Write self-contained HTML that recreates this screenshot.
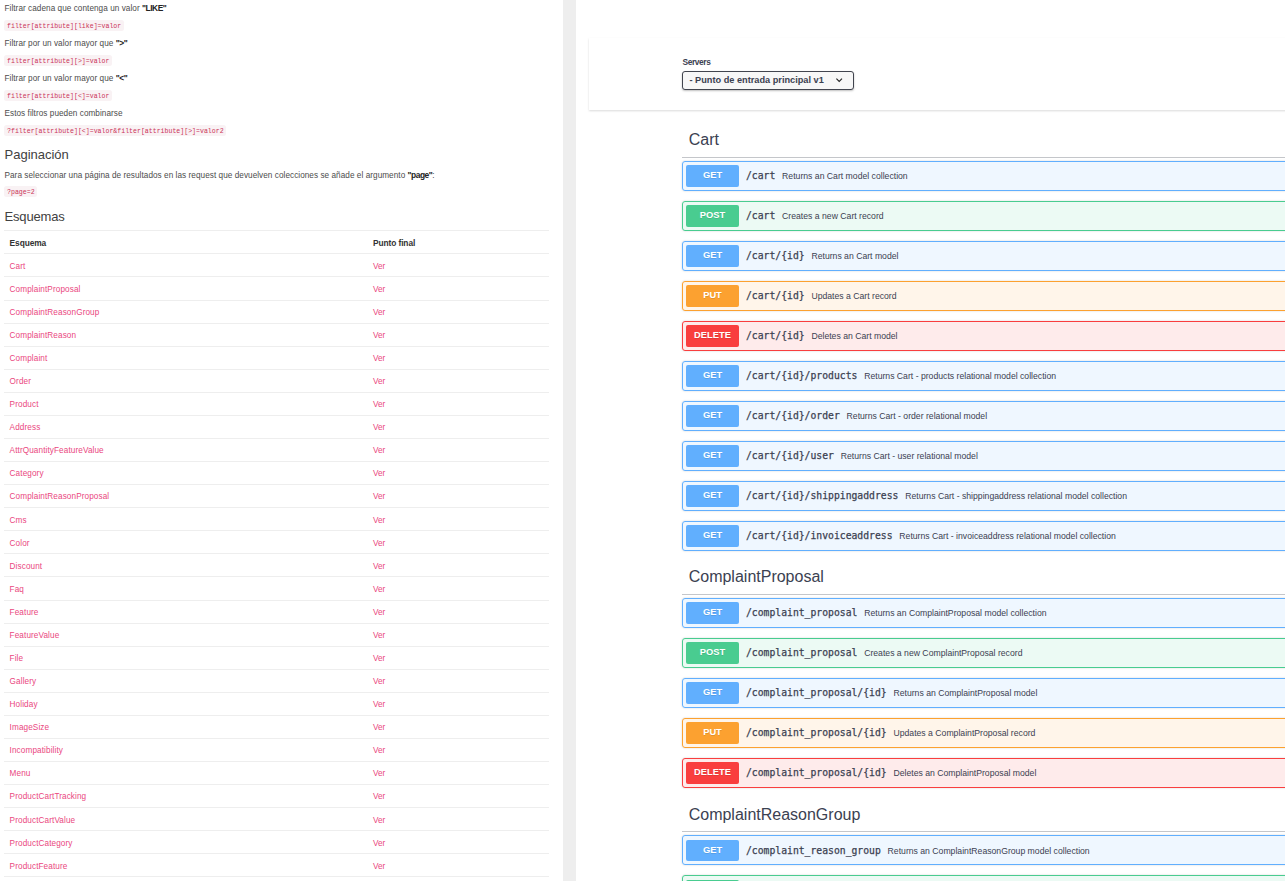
<!DOCTYPE html>
<html lang="es"><head><meta charset="utf-8"><title>API</title>
<style>
html,body{margin:0;padding:0;background:#fff;}
body{width:1285px;height:881px;overflow:hidden;position:relative;font-family:"Liberation Sans",sans-serif;}
#left{position:absolute;left:0;top:0;width:563px;height:881px;overflow:hidden;background:#fff;color:#333;font-family:"Liberation Sans",sans-serif;font-size:8px;}
#bar{position:absolute;left:563px;top:0;width:13px;height:881px;background:#eee;}
#right{position:absolute;left:576px;top:0;width:709px;height:881px;overflow:hidden;background:#fff;color:#3b4151;}
.p{position:absolute;left:4.5px;white-space:nowrap;line-height:12px;height:12px;margin:0;font-size:8.2px;letter-spacing:0.05px;color:#4c4c4c;}
.p b{color:#222;font-size:8.4px;letter-spacing:-0.45px;}
.c{position:absolute;left:4px;white-space:nowrap;box-sizing:border-box;height:10.5px;line-height:7.5px;background:#f9f2f4;color:#cb3358;border-radius:2.5px;padding:3px 2.4px 0 3px;font-family:"Liberation Mono",monospace;font-size:6.574px;margin:0;}
.h{position:absolute;left:4.5px;white-space:nowrap;font-size:13px;line-height:18px;height:18px;color:#414141;margin:0;font-weight:normal;}
.r{position:absolute;left:4px;width:545px;border-top:1px solid #eee;height:22px;}
.r span,.r a{position:absolute;top:7.2px;line-height:12px;white-space:nowrap;color:#ea4780;text-decoration:none;font-size:8.2px;letter-spacing:0.1px;}
.r .a{left:5.6px}.r a.b{left:369px;letter-spacing:0}.r .b{left:369px}
.r.hd span{font-weight:bold;color:#333;font-size:8.4px;letter-spacing:-0.1px;top:6.3px;}
#sc{position:absolute;left:13px;top:38px;width:800px;height:72px;background:#fff;box-shadow:0 1px 2px 0 rgba(0,0,0,.15);}
#sc label{position:absolute;left:93.5px;top:19.4px;font-size:8.4px;letter-spacing:-0.4px;font-weight:bold;line-height:10px;color:#3b4151;}
#sel{position:absolute;left:93px;top:33px;width:170px;height:17px;border:1px solid #41444e;border-radius:3px;background:#f7f7f7;box-shadow:0 1px 2px 0 rgba(0,0,0,.25);font-size:9.2px;font-weight:bold;color:#3b4151;line-height:17px;}
#sel span{position:absolute;left:6.5px;top:0;white-space:nowrap;}
#sel svg{position:absolute;left:152px;top:5px;}
.tg{position:absolute;left:106px;width:800px;height:34px;border-bottom:1px solid rgba(59,65,81,.3);box-sizing:border-box;}
.tg h3{position:absolute;left:6.7px;top:6.8px;margin:0;font-size:16px;font-weight:normal;line-height:18px;color:#3b4151;white-space:nowrap;}
.op{position:absolute;left:106px;width:800px;height:30px;box-sizing:border-box;border:1px solid;border-radius:3px;box-shadow:0 0 2px rgba(0,0,0,.19);}
.op .m{position:absolute;left:3px;top:3px;width:53px;height:22px;border-radius:2px;color:#fff;font-size:9.33px;font-weight:bold;text-align:center;line-height:20.5px;text-shadow:0 1px 0 rgba(0,0,0,.1);}
.op .t{position:absolute;left:63px;top:-2px;height:28px;line-height:28px;white-space:nowrap;}
.op .pa{font-family:"DejaVu Sans Mono","Liberation Mono",monospace;font-weight:normal;font-size:9.74px;color:#3b4151;-webkit-text-stroke:0.25px #3b4151;}
.op .d{font-size:8.67px;color:#3b4151;margin-left:6.8px;}
.op.s3 .m{top:4px;height:21px;line-height:20px;}.op.s3 .t{top:-1px;}
.get{border-color:#61affe;background:rgba(97,175,254,.1);}.get .m{background:#61affe;}
.post{border-color:#49cc90;background:rgba(73,204,144,.1);}.post .m{background:#49cc90;}
.put{border-color:#fca130;background:rgba(252,161,48,.1);}.put .m{background:#fca130;}
.delete{border-color:#f93e3e;background:rgba(249,62,62,.1);}.delete .m{background:#f93e3e;}
</style></head><body>

<div id="left">
<p class="p" style="top:2.20px">Filtrar cadena que contenga un valor <b>&quot;LIKE&quot;</b></p>
<pre class="c" style="top:20.00px">filter[attribute][like]=valor</pre>
<p class="p" style="top:37.20px">Filtrar por un valor mayor que <b>&quot;&gt;&quot;</b></p>
<pre class="c" style="top:55.00px">filter[attribute][&gt;]=valor</pre>
<p class="p" style="top:72.20px">Filtrar por un valor mayor que <b>&quot;&lt;&quot;</b></p>
<pre class="c" style="top:90.20px">filter[attribute][&lt;]=valor</pre>
<p class="p" style="top:108.20px">Estos filtros pueden combinarse</p>
<pre class="c" style="top:125.20px">?filter[attribute][&lt;]=valor&amp;filter[attribute][&gt;]=valor2</pre>
<h2 class="h" style="top:146.40px">Paginación</h2>
<p class="p" style="top:169.20px">Para seleccionar una página de resultados en las request que devuelven colecciones se añade el argumento <b>&quot;page&quot;</b>:</p>
<pre class="c" style="top:186.40px">?page=2</pre>
<h2 class="h" style="top:208.20px"><span style="letter-spacing:-0.15px">Esquemas</span></h2>
<div class="r hd" style="top:230px"><span class="a">Esquema</span><span class="b">Punto final</span></div>
<div class="r" style="top:253px"><a class="a" style="top:7.2px">Cart</a><a class="b" style="top:7.2px">Ver</a></div>
<div class="r" style="top:276px"><a class="a" style="top:7.2px">ComplaintProposal</a><a class="b" style="top:7.2px">Ver</a></div>
<div class="r" style="top:300px"><a class="a" style="top:6.2px">ComplaintReasonGroup</a><a class="b" style="top:6.2px">Ver</a></div>
<div class="r" style="top:323px"><a class="a" style="top:6.2px">ComplaintReason</a><a class="b" style="top:6.2px">Ver</a></div>
<div class="r" style="top:346px"><a class="a" style="top:6.2px">Complaint</a><a class="b" style="top:6.2px">Ver</a></div>
<div class="r" style="top:369px"><a class="a" style="top:6.2px">Order</a><a class="b" style="top:6.2px">Ver</a></div>
<div class="r" style="top:392px"><a class="a" style="top:6.2px">Product</a><a class="b" style="top:6.2px">Ver</a></div>
<div class="r" style="top:415px"><a class="a" style="top:6.2px">Address</a><a class="b" style="top:6.2px">Ver</a></div>
<div class="r" style="top:438px"><a class="a" style="top:6.2px">AttrQuantityFeatureValue</a><a class="b" style="top:6.2px">Ver</a></div>
<div class="r" style="top:461px"><a class="a" style="top:6.2px">Category</a><a class="b" style="top:6.2px">Ver</a></div>
<div class="r" style="top:484px"><a class="a" style="top:6.2px">ComplaintReasonProposal</a><a class="b" style="top:6.2px">Ver</a></div>
<div class="r" style="top:507px"><a class="a" style="top:7.2px">Cms</a><a class="b" style="top:7.2px">Ver</a></div>
<div class="r" style="top:530px"><a class="a" style="top:7.2px">Color</a><a class="b" style="top:7.2px">Ver</a></div>
<div class="r" style="top:553px"><a class="a" style="top:7.2px">Discount</a><a class="b" style="top:7.2px">Ver</a></div>
<div class="r" style="top:576px"><a class="a" style="top:7.2px">Faq</a><a class="b" style="top:7.2px">Ver</a></div>
<div class="r" style="top:600px"><a class="a" style="top:6.2px">Feature</a><a class="b" style="top:6.2px">Ver</a></div>
<div class="r" style="top:623px"><a class="a" style="top:6.2px">FeatureValue</a><a class="b" style="top:6.2px">Ver</a></div>
<div class="r" style="top:646px"><a class="a" style="top:6.2px">File</a><a class="b" style="top:6.2px">Ver</a></div>
<div class="r" style="top:669px"><a class="a" style="top:6.2px">Gallery</a><a class="b" style="top:6.2px">Ver</a></div>
<div class="r" style="top:692px"><a class="a" style="top:6.2px">Holiday</a><a class="b" style="top:6.2px">Ver</a></div>
<div class="r" style="top:715px"><a class="a" style="top:6.2px">ImageSize</a><a class="b" style="top:6.2px">Ver</a></div>
<div class="r" style="top:738px"><a class="a" style="top:6.2px">Incompatibility</a><a class="b" style="top:6.2px">Ver</a></div>
<div class="r" style="top:761px"><a class="a" style="top:6.2px">Menu</a><a class="b" style="top:6.2px">Ver</a></div>
<div class="r" style="top:784px"><a class="a" style="top:6.2px">ProductCartTracking</a><a class="b" style="top:6.2px">Ver</a></div>
<div class="r" style="top:807px"><a class="a" style="top:7.2px">ProductCartValue</a><a class="b" style="top:7.2px">Ver</a></div>
<div class="r" style="top:830px"><a class="a" style="top:7.2px">ProductCategory</a><a class="b" style="top:7.2px">Ver</a></div>
<div class="r" style="top:853px"><a class="a" style="top:7.2px">ProductFeature</a><a class="b" style="top:7.2px">Ver</a></div>
<div class="r" style="top:876px"></div>
</div>
<div id="bar"></div>
<div id="right">
<div id="sc"><label>Servers</label><div id="sel"><span>- Punto de entrada principal v1</span><svg width="8" height="6" viewBox="0 0 8 6"><path d="M1.4 1.6 L4.2 4.4 L7 1.6" fill="none" stroke="#222" stroke-width="1.1"/></svg></div></div>
<div class="tg" style="top:124px"><h3>Cart</h3></div>
<div class="op get" style="top:161px"><span class="m">GET</span><span class="t"><span class="pa">/cart</span><span class="d">Returns an Cart model collection</span></span></div>
<div class="op post" style="top:201px"><span class="m">POST</span><span class="t"><span class="pa">/cart</span><span class="d">Creates a new Cart record</span></span></div>
<div class="op get" style="top:241px"><span class="m">GET</span><span class="t"><span class="pa">/cart/{id}</span><span class="d">Returns an Cart model</span></span></div>
<div class="op put" style="top:281px"><span class="m">PUT</span><span class="t"><span class="pa">/cart/{id}</span><span class="d">Updates a Cart record</span></span></div>
<div class="op delete" style="top:321px"><span class="m">DELETE</span><span class="t"><span class="pa">/cart/{id}</span><span class="d">Deletes an Cart model</span></span></div>
<div class="op get" style="top:361px"><span class="m">GET</span><span class="t"><span class="pa">/cart/{id}/products</span><span class="d">Returns Cart - products relational model collection</span></span></div>
<div class="op get" style="top:401px"><span class="m">GET</span><span class="t"><span class="pa">/cart/{id}/order</span><span class="d">Returns Cart - order relational model</span></span></div>
<div class="op get" style="top:441px"><span class="m">GET</span><span class="t"><span class="pa">/cart/{id}/user</span><span class="d">Returns Cart - user relational model</span></span></div>
<div class="op get" style="top:481px"><span class="m">GET</span><span class="t"><span class="pa">/cart/{id}/shippingaddress</span><span class="d">Returns Cart - shippingaddress relational model collection</span></span></div>
<div class="op get" style="top:521px"><span class="m">GET</span><span class="t"><span class="pa">/cart/{id}/invoiceaddress</span><span class="d">Returns Cart - invoiceaddress relational model collection</span></span></div>
<div class="tg" style="top:561px"><h3>ComplaintProposal</h3></div>
<div class="op get" style="top:598px"><span class="m">GET</span><span class="t"><span class="pa">/complaint_proposal</span><span class="d">Returns an ComplaintProposal model collection</span></span></div>
<div class="op post" style="top:638px"><span class="m">POST</span><span class="t"><span class="pa">/complaint_proposal</span><span class="d">Creates a new ComplaintProposal record</span></span></div>
<div class="op get" style="top:678px"><span class="m">GET</span><span class="t"><span class="pa">/complaint_proposal/{id}</span><span class="d">Returns an ComplaintProposal model</span></span></div>
<div class="op put" style="top:718px"><span class="m">PUT</span><span class="t"><span class="pa">/complaint_proposal/{id}</span><span class="d">Updates a ComplaintProposal record</span></span></div>
<div class="op delete" style="top:758px"><span class="m">DELETE</span><span class="t"><span class="pa">/complaint_proposal/{id}</span><span class="d">Deletes an ComplaintProposal model</span></span></div>
<div class="tg" style="top:798px"><h3 style="top:7.8px">ComplaintReasonGroup</h3></div>
<div class="op get s3" style="top:835px"><span class="m">GET</span><span class="t"><span class="pa">/complaint_reason_group</span><span class="d">Returns an ComplaintReasonGroup model collection</span></span></div>
<div class="op post s3" style="top:875px"><span class="m">POST</span><span class="t"><span class="pa">/complaint_reason_group</span><span class="d">Creates a new ComplaintReasonGroup record</span></span></div>
</div>
</body></html>
